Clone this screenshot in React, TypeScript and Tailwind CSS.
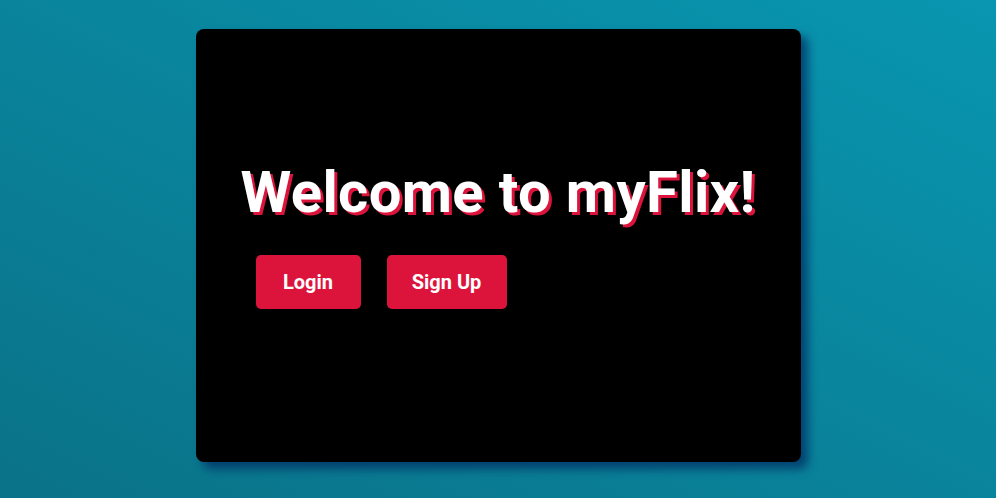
export default function App() {
  return (
    <div className="min-h-screen w-full bg-[linear-gradient(to_top_right,#0a7288,#0996b0)] pt-[29px] font-['Roboto',sans-serif]">
      <div className="mx-auto flex h-[433px] w-[605px] flex-col rounded-[8px] bg-black pt-[129px] shadow-[7px_7px_10px_rgba(0,45,100,0.75)]">
        <h1 className="text-center text-[58px] leading-[68px] font-bold tracking-[0.35px] text-white [text-shadow:3px_3px_0_#dc143c]">
          Welcome to myFlix!
        </h1>
        <div className="mt-[29px] flex gap-[26px] pl-[60px]">
          <button className="h-[54px] w-[105px] rounded-[5px] bg-[#dc143c] text-[20px] font-bold text-white">
            Login
          </button>
          <button className="h-[54px] w-[120px] rounded-[5px] bg-[#dc143c] text-[20px] font-bold text-white">
            Sign Up
          </button>
        </div>
      </div>
    </div>
  )
}
